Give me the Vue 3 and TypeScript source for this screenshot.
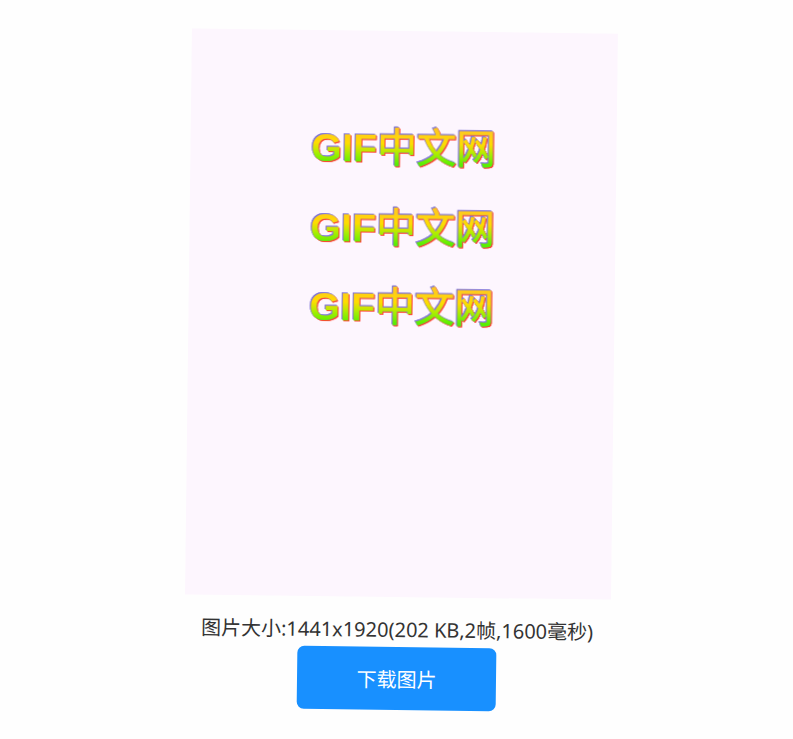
<script setup lang="ts">
const lines: number[] = [0, 1, 2]
</script>

<template>
  <main class="page">
    <div class="picture">
      <svg v-for="i in lines" :key="i" class="gif-line" viewBox="0 0 200 79.5" width="200" height="79.5">
        <defs>
          <linearGradient :id="`gif-fill-${i}`" gradientUnits="userSpaceOnUse" x1="0" y1="22" x2="0" y2="56">
            <stop offset="0" stop-color="#ffc81e" />
            <stop offset="0.4" stop-color="#ffdc00" />
            <stop offset="0.7" stop-color="#a8ee00" />
            <stop offset="1" stop-color="#58f000" />
          </linearGradient>
        </defs>
        <text x="100" y="53.5" text-anchor="middle" :fill="`url(#gif-fill-${i})`">
          <tspan class="latin">GIF</tspan><tspan class="cjk" :stroke="`url(#gif-fill-${i})`">中文网</tspan>
        </text>
      </svg>
    </div>
    <p class="info">图片大小:1441x1920(202 KB,2帧,1600毫秒)</p>
    <button class="download" type="button">下载图片</button>
  </main>
</template>

<style scoped>
.page {
  width: 793px;
  height: 739px;
  box-sizing: border-box;
  padding-top: 31px;
  display: flex;
  flex-direction: column;
  align-items: center;
  background: #fefefe;
  transform: rotate(0.7deg);
  transform-origin: 50% 680px;
  font-family: "Liberation Sans", "Noto Sans CJK SC", sans-serif;
}
.picture {
  width: 426px;
  height: 566px;
  box-sizing: border-box;
  padding-top: 77px;
  background: #fdf6fe;
  display: flex;
  flex-direction: column;
  align-items: center;
}
.gif-line {
  display: block;
  overflow: visible;
  font-size: 39.5px;
  font-family: "Liberation Sans", "Noto Sans CJK SC", sans-serif;
  filter: drop-shadow(-0.7px -0.7px 0.3px #7f74d8) drop-shadow(0.6px 0.6px 0.3px #7f74d8) drop-shadow(1px 1px 0 #ff4030) blur(0.25px);
}
.latin {
  font-weight: 700;
}
.cjk {
  font-weight: 400;
  stroke-width: 0.9px;
}
.info {
  margin: 21px 0 0;
  font-family: "Noto Sans", "Noto Sans CJK SC", sans-serif;
  font-size: 20px;
  line-height: 24px;
  color: #333;
  white-space: nowrap;
}
.download {
  margin-top: 5px;
  width: 199px;
  height: 63px;
  border: none;
  border-radius: 7px;
  background: #1890ff;
  color: #fff;
  font-family: "Noto Sans CJK SC", "Liberation Sans", sans-serif;
  font-size: 20px;
}
</style>

<style>
html, body { margin: 0; background: #fefefe; overflow: hidden; }
</style>
